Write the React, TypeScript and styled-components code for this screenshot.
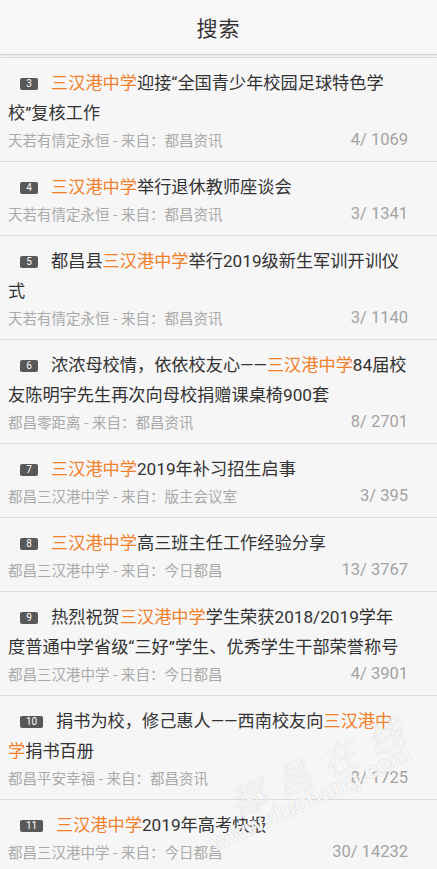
import React from "react";
import styled, { createGlobalStyle } from "styled-components";

const Global = createGlobalStyle`
  html, body { margin: 0; padding: 0; background: #f5f5f5; }
  body { font-family: Roboto, "Noto Sans CJK SC", sans-serif; }
  * { box-sizing: border-box; }
`;

const Page = styled.div`
  position: relative;
  width: 437px;
  height: 869px;
  overflow: hidden;
  background: #f5f5f5;
`;

const Header = styled.header`
  height: 55px;
  background: #f7f7f7;
  border-bottom: 1px solid #d6d6d6;
  box-shadow: 0 1px 2px rgba(0, 0, 0, 0.06);
  display: flex;
  align-items: center;
  justify-content: center;
  margin-bottom: 2px;
`;

const Title = styled.h1`
  margin: 0 0 1px;
  font-family: "Noto Sans CJK SC", sans-serif;
  font-size: 21px;
  font-weight: 400;
  color: #333;
  letter-spacing: 1px;
`;

const List = styled.ul`
  list-style: none;
  margin: 0;
  padding: 0;
`;

const Item = styled.li`
  border-top: 1px solid #dcdcdc;
  padding: 10px 29px 11px 8px;
  background: #f6f6f6;
`;

const ItemTitle = styled.div`
  font-family: Roboto, "Noto Sans CJK SC", sans-serif;
  font-size: 17.2px;
  line-height: 30px;
  color: #333;
  margin-right: -1px;
`;

const Badge = styled.span<{ $wide: boolean }>`
  display: inline-block;
  vertical-align: 2px;
  width: ${(p) => (p.$wide ? 23 : 18)}px;
  height: 12px;
  margin: 0 13px 0 12px;
  border-radius: 2px;
  background: #585858;
  color: #fff;
  font-family: Roboto, "Liberation Sans", sans-serif;
  font-size: 10px;
  line-height: 12px;
  text-align: center;
`;

const Highlight = styled.span`
  color: #f0812b;
`;

const Meta = styled.div`
  display: flex;
  justify-content: space-between;
  align-items: center;
  height: 22px;
`;

const Source = styled.span`
  font-family: "Noto Sans CJK SC", sans-serif;
  font-size: 14.5px;
  color: #aaa;
`;

const Count = styled.span`
  font-family: Roboto, "Liberation Sans", sans-serif;
  font-size: 16.5px;
  color: #a3a3a3;
`;

const WaterCn = styled.div`
  position: absolute;
  left: 220px;
  top: 780px;
  transform: rotate(-24deg);
  transform-origin: left top;
  font-family: "Noto Sans CJK SC", sans-serif;
  font-style: italic;
  font-size: 36px;
  font-weight: 300;
  letter-spacing: 14px;
  white-space: nowrap;
  color: rgba(255, 255, 255, 0.9);
  text-shadow: 0 0 1px rgba(110, 110, 110, 0.45);
  pointer-events: none;
`;

const WaterEn = styled.div`
  position: absolute;
  left: 206px;
  top: 832px;
  transform: rotate(-25deg);
  transform-origin: left top;
  font-family: "Liberation Sans", sans-serif;
  font-size: 24px;
  font-weight: 700;
  white-space: nowrap;
  color: rgba(255, 255, 255, 0.9);
  text-shadow: 0 0 1px rgba(110, 110, 110, 0.45);
  pointer-events: none;
`;

type Part = { t: string; h?: boolean };
type Row = { n: number; parts: Part[]; author: string; from: string; count: string };

const K = "三汉港中学";

const rows: Row[] = [
  { n: 3, parts: [{ t: K, h: true }, { t: "迎接“全国青少年校园足球特色学校”复核工作" }], author: "天若有情定永恒", from: "都昌资讯", count: "4/ 1069" },
  { n: 4, parts: [{ t: K, h: true }, { t: "举行退休教师座谈会" }], author: "天若有情定永恒", from: "都昌资讯", count: "3/ 1341" },
  { n: 5, parts: [{ t: "都昌县" }, { t: K, h: true }, { t: "举行2019级新生军训开训仪式" }], author: "天若有情定永恒", from: "都昌资讯", count: "3/ 1140" },
  { n: 6, parts: [{ t: "浓浓母校情，依依校友心——" }, { t: K, h: true }, { t: "84届校友陈明宇先生再次向母校捐赠课桌椅900套" }], author: "都昌零距离", from: "都昌资讯", count: "8/ 2701" },
  { n: 7, parts: [{ t: K, h: true }, { t: "2019年补习招生启事" }], author: "都昌三汉港中学", from: "版主会议室", count: "3/ 395" },
  { n: 8, parts: [{ t: K, h: true }, { t: "高三班主任工作经验分享" }], author: "都昌三汉港中学", from: "今日都昌", count: "13/ 3767" },
  { n: 9, parts: [{ t: "热烈祝贺" }, { t: K, h: true }, { t: "学生荣获2018/2019学年度普通中学省级“三好”学生、优秀学生干部荣誉称号" }], author: "都昌三汉港中学", from: "今日都昌", count: "4/ 3901" },
  { n: 10, parts: [{ t: "捐书为校，修己惠人——西南校友向" }, { t: K, h: true }, { t: "捐书百册" }], author: "都昌平安幸福", from: "都昌资讯", count: "8/ 1725" },
  { n: 11, parts: [{ t: K, h: true }, { t: "2019年高考快报" }], author: "都昌三汉港中学", from: "今日都昌", count: "30/ 14232" },
];

export default function App() {
  return (
    <Page>
      <Global />
      <Header>
        <Title>搜索</Title>
      </Header>
      <List>
        {rows.map((r) => (
          <Item key={r.n}>
            <ItemTitle>
              <Badge $wide={r.n >= 10}>{r.n}</Badge>
              {r.parts.map((p, i) =>
                p.h ? <Highlight key={i}>{p.t}</Highlight> : <React.Fragment key={i}>{p.t}</React.Fragment>
              )}
            </ItemTitle>
            <Meta>
              <Source>
                {r.author} - 来自：{r.from}
              </Source>
              <Count>{r.count}</Count>
            </Meta>
          </Item>
        ))}
      </List>
      <WaterCn>都昌在线</WaterCn>
      <WaterEn>www.duchang.com</WaterEn>
    </Page>
  );
}
